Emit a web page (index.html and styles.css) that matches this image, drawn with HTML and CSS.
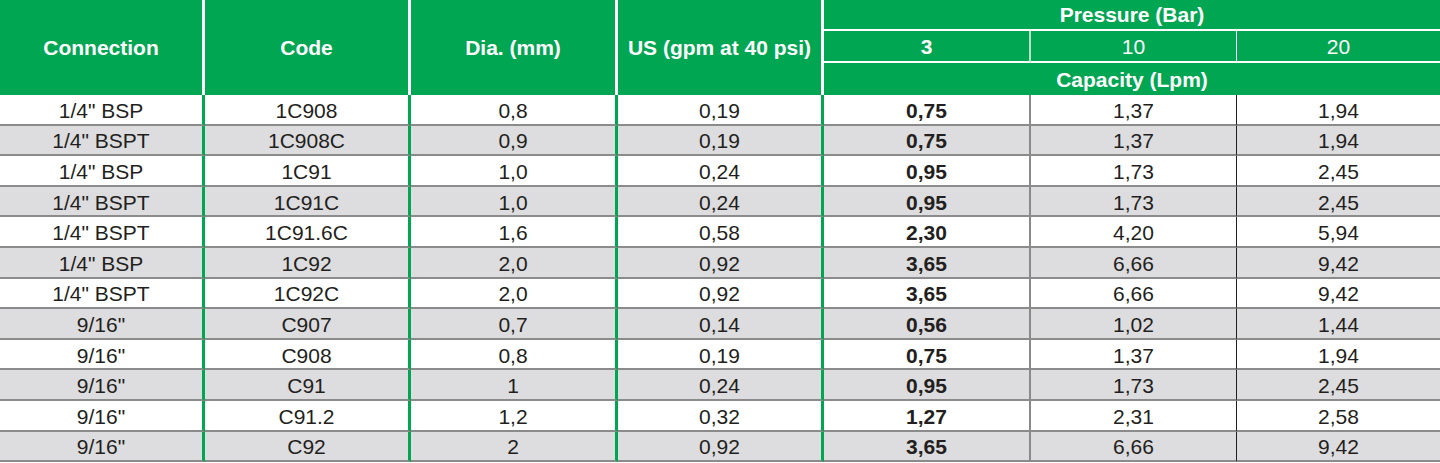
FILE: index.html
```html
<!DOCTYPE html>
<html lang="en">
<head>
<meta charset="utf-8">
<title>Nozzle capacity table</title>
<link rel="stylesheet" href="styles.css">
</head>
<body>
<div class="table">
  <div class="cell h h-main c1">Connection</div>
  <div class="cell h h-main c2">Code</div>
  <div class="cell h h-main c3">Dia. (mm)</div>
  <div class="cell h h-main c4">US (gpm at 40 psi)</div>
  <div class="cell h h-group">Pressure (Bar)</div>
  <div class="cell h h-sub s1 bold">3</div>
  <div class="cell h h-sub s2">10</div>
  <div class="cell h h-sub s3">20</div>
  <div class="cell h h-cap">Capacity (Lpm)</div>

  <div class="row"><div class="cell d g">1/4" BSP</div><div class="cell d g">1C908</div><div class="cell d g">0,8</div><div class="cell d g">0,19</div><div class="cell d b5 bold">0,75</div><div class="cell d b6">1,37</div><div class="cell d">1,94</div></div>
  <div class="row alt"><div class="cell d g">1/4" BSPT</div><div class="cell d g">1C908C</div><div class="cell d g">0,9</div><div class="cell d g">0,19</div><div class="cell d b5 bold">0,75</div><div class="cell d b6">1,37</div><div class="cell d">1,94</div></div>
  <div class="row"><div class="cell d g">1/4" BSP</div><div class="cell d g">1C91</div><div class="cell d g">1,0</div><div class="cell d g">0,24</div><div class="cell d b5 bold">0,95</div><div class="cell d b6">1,73</div><div class="cell d">2,45</div></div>
  <div class="row alt"><div class="cell d g">1/4" BSPT</div><div class="cell d g">1C91C</div><div class="cell d g">1,0</div><div class="cell d g">0,24</div><div class="cell d b5 bold">0,95</div><div class="cell d b6">1,73</div><div class="cell d">2,45</div></div>
  <div class="row"><div class="cell d g">1/4" BSPT</div><div class="cell d g">1C91.6C</div><div class="cell d g">1,6</div><div class="cell d g">0,58</div><div class="cell d b5 bold">2,30</div><div class="cell d b6">4,20</div><div class="cell d">5,94</div></div>
  <div class="row alt"><div class="cell d g">1/4" BSP</div><div class="cell d g">1C92</div><div class="cell d g">2,0</div><div class="cell d g">0,92</div><div class="cell d b5 bold">3,65</div><div class="cell d b6">6,66</div><div class="cell d">9,42</div></div>
  <div class="row"><div class="cell d g">1/4" BSPT</div><div class="cell d g">1C92C</div><div class="cell d g">2,0</div><div class="cell d g">0,92</div><div class="cell d b5 bold">3,65</div><div class="cell d b6">6,66</div><div class="cell d">9,42</div></div>
  <div class="row alt"><div class="cell d g">9/16"</div><div class="cell d g">C907</div><div class="cell d g">0,7</div><div class="cell d g">0,14</div><div class="cell d b5 bold">0,56</div><div class="cell d b6">1,02</div><div class="cell d">1,44</div></div>
  <div class="row"><div class="cell d g">9/16"</div><div class="cell d g">C908</div><div class="cell d g">0,8</div><div class="cell d g">0,19</div><div class="cell d b5 bold">0,75</div><div class="cell d b6">1,37</div><div class="cell d">1,94</div></div>
  <div class="row alt"><div class="cell d g">9/16"</div><div class="cell d g">C91</div><div class="cell d g">1</div><div class="cell d g">0,24</div><div class="cell d b5 bold">0,95</div><div class="cell d b6">1,73</div><div class="cell d">2,45</div></div>
  <div class="row"><div class="cell d g">9/16"</div><div class="cell d g">C91.2</div><div class="cell d g">1,2</div><div class="cell d g">0,32</div><div class="cell d b5 bold">1,27</div><div class="cell d b6">2,31</div><div class="cell d">2,58</div></div>
  <div class="row alt"><div class="cell d g">9/16"</div><div class="cell d g">C92</div><div class="cell d g">2</div><div class="cell d g">0,92</div><div class="cell d b5 bold">3,65</div><div class="cell d b6">6,66</div><div class="cell d">9,42</div></div>
</div>
</body>
</html>
```

FILE: styles.css
```css
html, body {
  margin: 0;
  padding: 0;
  background: #ffffff;
}

body {
  font-family: "Liberation Sans", Arial, sans-serif;
  font-size: 21px;
  color: #231f20;
}

.table {
  display: grid;
  grid-template-columns: 205px 206px 207px 206px 207px 206px 1fr;
  grid-template-rows: 31px 32px 32px;
  grid-auto-rows: 30.6px;
  width: 1440px;
}

.row {
  display: contents;
}

.cell {
  box-sizing: border-box;
  display: flex;
  align-items: center;
  justify-content: center;
  white-space: nowrap;
  line-height: 1;
  min-width: 0;
}

.h {
  background: #00a651;
  color: #ffffff;
  font-weight: bold;
}

.h-main {
  grid-row: 1 / 4;
  border-right: 3px solid #ffffff;
}

.c1 { grid-column: 1; }
.c2 { grid-column: 2; }
.c3 { grid-column: 3; }
.c4 { grid-column: 4; }

.h-group {
  grid-column: 5 / 8;
  grid-row: 1;
  border-bottom: 2px solid #ffffff;
}

.h-sub {
  grid-row: 2;
  font-weight: normal;
  border-bottom: 2px solid #ffffff;
}

.h-sub.bold {
  font-weight: bold;
}

.s1 {
  grid-column: 5;
  border-right: 2px solid #b8e2c8;
}

.s2 {
  grid-column: 6;
  border-right: 1px solid #ffffff;
}

.s3 {
  grid-column: 7;
}

.h-cap {
  grid-column: 5 / 8;
  grid-row: 3;
}

.d {
  border-bottom: 2px solid #8b8b8b;
  background: #ffffff;
  padding-top: 2px;
}

.alt .d {
  background: #dddcde;
}

.d.g {
  border-right: 3px solid #00a651;
}

.d.b5 {
  border-right: 2px solid #8a8a8a;
}

.d.b6 {
  border-right: 1px solid #231f20;
}

.bold {
  font-weight: bold;
}
```
